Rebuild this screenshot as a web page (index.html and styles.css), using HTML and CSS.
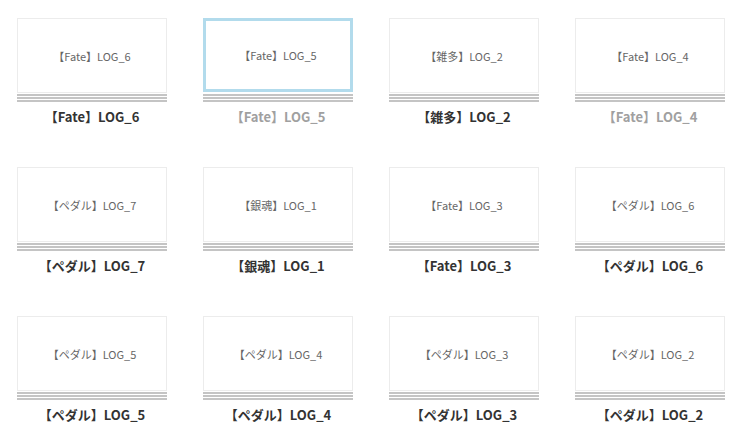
FILE: index.html
```html
<!DOCTYPE html>
<html lang="ja">
<head>
    <meta charset="UTF-8">
    <meta name="viewport" content="width=device-width, initial-scale=1.0">
    <title>LOG</title>
    <link rel="stylesheet" href="styles.css">
</head>
<body>
    <div class="log-grid">
        <a class="log-card" href="#">
            <div class="thumb">【Fate】LOG_6</div>
            <div class="stack"></div>
            <div class="log-title">【Fate】LOG_6</div>
        </a>
        <a class="log-card active visited" href="#">
            <div class="thumb">【Fate】LOG_5</div>
            <div class="stack"></div>
            <div class="log-title">【Fate】LOG_5</div>
        </a>
        <a class="log-card" href="#">
            <div class="thumb">【雑多】LOG_2</div>
            <div class="stack"></div>
            <div class="log-title">【雑多】LOG_2</div>
        </a>
        <a class="log-card visited" href="#">
            <div class="thumb">【Fate】LOG_4</div>
            <div class="stack"></div>
            <div class="log-title">【Fate】LOG_4</div>
        </a>

        <a class="log-card" href="#">
            <div class="thumb">【ペダル】LOG_7</div>
            <div class="stack"></div>
            <div class="log-title">【ペダル】LOG_7</div>
        </a>
        <a class="log-card" href="#">
            <div class="thumb">【銀魂】LOG_1</div>
            <div class="stack"></div>
            <div class="log-title">【銀魂】LOG_1</div>
        </a>
        <a class="log-card" href="#">
            <div class="thumb">【Fate】LOG_3</div>
            <div class="stack"></div>
            <div class="log-title">【Fate】LOG_3</div>
        </a>
        <a class="log-card" href="#">
            <div class="thumb">【ペダル】LOG_6</div>
            <div class="stack"></div>
            <div class="log-title">【ペダル】LOG_6</div>
        </a>

        <a class="log-card" href="#">
            <div class="thumb">【ペダル】LOG_5</div>
            <div class="stack"></div>
            <div class="log-title">【ペダル】LOG_5</div>
        </a>
        <a class="log-card" href="#">
            <div class="thumb">【ペダル】LOG_4</div>
            <div class="stack"></div>
            <div class="log-title">【ペダル】LOG_4</div>
        </a>
        <a class="log-card" href="#">
            <div class="thumb">【ペダル】LOG_3</div>
            <div class="stack"></div>
            <div class="log-title">【ペダル】LOG_3</div>
        </a>
        <a class="log-card" href="#">
            <div class="thumb">【ペダル】LOG_2</div>
            <div class="stack"></div>
            <div class="log-title">【ペダル】LOG_2</div>
        </a>
    </div>
</body>
</html>
```

FILE: styles.css
```css
body {
    font-family: "Noto Sans CJK JP", "Noto Sans", sans-serif;
    margin: 0;
    padding: 0;
    background-color: #fff;
}

.log-grid {
    display: grid;
    grid-template-columns: repeat(4, 150px);
    column-gap: 36px;
    row-gap: 40px;
    padding: 18px 0 0 17px;
}

.log-card {
    display: block;
    width: 150px;
    text-decoration: none;
    color: #333;
}

.log-card .thumb {
    box-sizing: border-box;
    height: 75px;
    border: 1px solid #ececec;
    background-color: #fff;
    display: flex;
    align-items: center;
    justify-content: center;
    font-size: 11px;
    color: #666;
}

.log-card.active .thumb {
    border: 3px solid #b2dbec;
    height: 74px;
}

.log-card .stack {
    height: 8px;
    margin-top: 1px;
    background: linear-gradient(to bottom,
        #c4c4c4 0 2px, #fff 2px 3px,
        #c4c4c4 3px 5px, #fff 5px 6px,
        #c4c4c4 6px 8px);
}

.log-card.active .stack {
    margin-top: 2px;
}

.log-card .log-title {
    margin-top: 5px;
    height: 20px;
    line-height: 20px;
    text-align: center;
    font-size: 13px;
    font-weight: bold;
    color: #333;
}

.log-card.visited .log-title {
    color: #a0a0a0;
}
```
